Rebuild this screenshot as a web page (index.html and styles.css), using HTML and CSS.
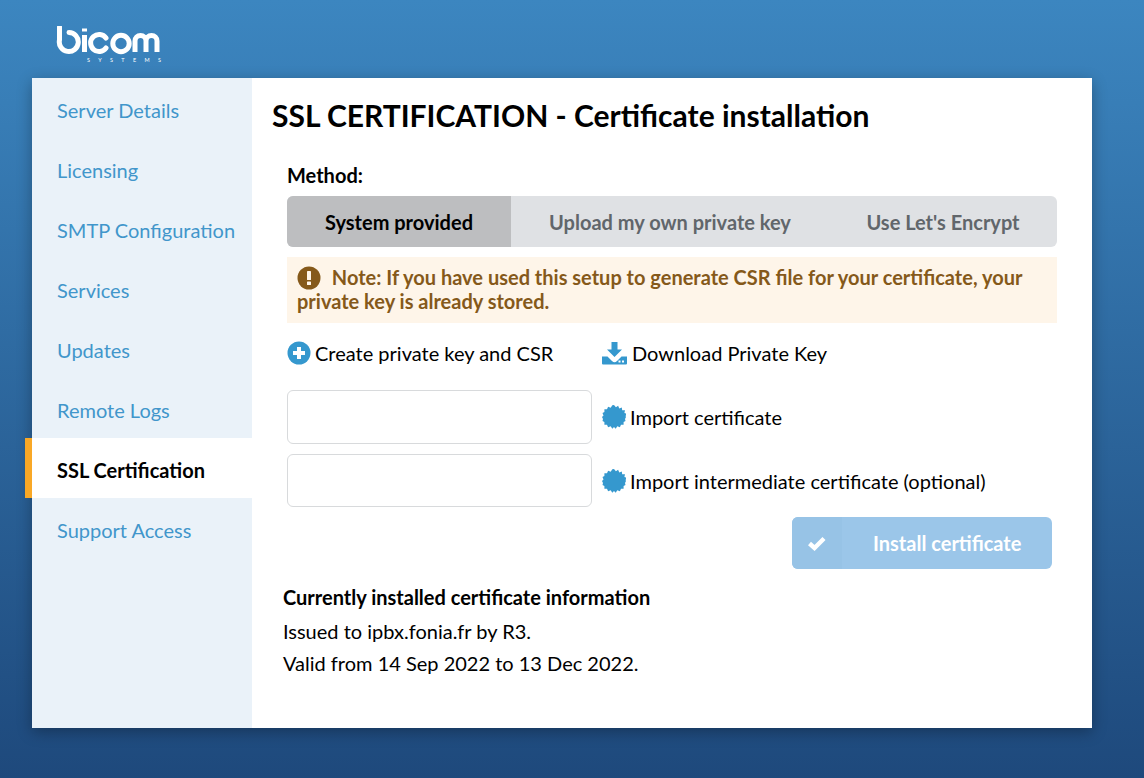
FILE: index.html
```html
<!DOCTYPE html>
<html lang="en">

<head>
    <meta charset="utf-8">
    <title>SSL Certification</title>
    <link rel="stylesheet" href="styles.css">
</head>

<body>
    <header class="top-bar">
        <svg class="logo" width="106" height="38" viewBox="0 0 106 38" fill="none" stroke="#fff" stroke-width="5">
            <path d="M3.5 1 V14 a9.5 9.5 0 1 0 9.5 -7.5" stroke-linecap="round"/>
            <path d="M28.5 9 V26"/>
            <path d="M28.5 2.5 V5.5"/>
            <path d="M50 12 a8.5 8.5 0 1 0 0 10" stroke-linecap="round"/>
            <circle cx="65" cy="17.5" r="8.2"/>
            <path d="M79 26 V15 a5.5 5.5 0 0 1 11 0 V26 M90 15 a5.5 5.5 0 0 1 11 0 V26 "/>
            <text x="31" y="36" fill="#fff" stroke="none" font-family="Lato, sans-serif" font-size="5.5" textLength="74">SYSTEMS</text>
        </svg>
    </header>

    <div class="panel">
        <nav class="side-menu">
            <a class="menu-item">Server Details</a>
            <a class="menu-item">Licensing</a>
            <a class="menu-item">SMTP Configuration</a>
            <a class="menu-item">Services</a>
            <a class="menu-item">Updates</a>
            <a class="menu-item">Remote Logs</a>
            <a class="menu-item active">SSL Certification</a>
            <a class="menu-item">Support Access</a>
        </nav>

        <main class="content">
            <h1 class="page-title">SSL CERTIFICATION - Certificate installation</h1>

            <div class="form-area">
                <div class="method-label">Method:</div>
                <div class="tabs">
                    <div class="tab active">System provided</div>
                    <div class="tab own-key">Upload my own private key</div>
                    <div class="tab encrypt">Use Let's Encrypt</div>
                </div>

                <div class="note">
                    <svg class="note-icon" width="24" height="24" viewBox="0 0 24 24">
                        <circle cx="12" cy="12" r="11.5" fill="#85591a"/>
                        <rect x="10" y="5" width="4" height="9" rx="0.6" fill="#fef5e9"/>
                        <rect x="10" y="15.5" width="4" height="3.6" rx="0.6" fill="#fef5e9"/>
                    </svg>
                    Note: If you have used this setup to generate CSR file for your certificate, your private key is already stored.
                </div>

                <div class="actions">
                    <a class="action create">
                        <svg width="24" height="24" viewBox="0 0 24 24">
                            <circle cx="12" cy="12" r="11.5" fill="#3598ce"/>
                            <path d="M12 6 V18 M6 12 H18" stroke="#fff" stroke-width="4"/>
                        </svg>
                        Create private key and CSR
                    </a>
                    <a class="action download">
                        <svg width="25" height="24" viewBox="0 0 25 24" fill="#3598ce">
                            <path d="M9.5 1 H15.5 V8.5 H20 L12.5 16 L5 8.5 H9.5 Z"/>
                            <path d="M0 15.5 H5.5 L10 20 a3.5 3.5 0 0 0 5 0 L19.5 15.5 H25 V22.5 a1 1 0 0 1 -1 1 H1 a1 1 0 0 1 -1 -1 Z"/>
                            <rect x="16.5" y="19.5" width="2" height="2" fill="#fff"/>
                            <rect x="20" y="19.5" width="2" height="2" fill="#fff"/>
                        </svg>
                        Download Private Key
                    </a>
                </div>

                <div class="import-row first">
                    <input class="cert-input" type="text">
                    <svg class="seal" width="24" height="24" viewBox="0 0 24 24">
                        <use href="#seal-shape"/>
                    </svg>
                    <span>Import certificate</span>
                </div>
                <div class="import-row second">
                    <input class="cert-input" type="text">
                    <svg class="seal" width="24" height="24" viewBox="0 0 24 24">
                        <use href="#seal-shape"/>
                    </svg>
                    <span>Import intermediate certificate (optional)</span>
                </div>

                <div class="button-row">
                    <button class="install-button" disabled>
                        <span class="button-icon">
                            <svg width="20" height="16" viewBox="0 0 20 16">
                                <path d="M2.5 8.5 L7.5 13 L17 3.5" fill="none" stroke="#fff" stroke-width="4.4"/>
                            </svg>
                        </span>
                        <span class="button-text">Install certificate</span>
                    </button>
                </div>
            </div>

            <div class="cert-info">
                <h2>Currently installed certificate information</h2>
                <p>Issued to ipbx.fonia.fr by R3.</p>
                <p>Valid from 14 Sep 2022 to 13 Dec 2022.</p>
            </div>
        </main>
    </div>

    <svg width="0" height="0" class="defs">
        <polygon id="seal-shape" fill="#3598ce" points="12,0 13.9,2.3 16.1,0.7 17.3,3.4 19.8,2.4 20.2,5.3 23,5.2 22.4,8 25,9 23.500,11 24,12 23,14 23.500,16 21.600,17 21.600,19.700 19,19.700 17.900,22.300 15.300,21.300 13.700,23.700 12,22 10.300,23.700 8.700,21.300 6.100,22.300 5,19.700 2.400,19.700 2.400,17 0.500,16 1,14 0,12 1.500,10.500 0.500,8 2.400,7 2.400,4.300 5,4.300 6.100,1.700 8.700,2.700 10.300,0.300" transform="translate(0 0)"/>
    </svg>
</body>

</html>
```

FILE: styles.css
```css
* {
    box-sizing: border-box;
}

body {
    margin: 0;
    height: 778px;
    overflow: hidden;
    font-family: Lato, 'Liberation Sans', sans-serif;
    font-size: 20px;
    color: #000;
    background: linear-gradient(#3c86c0, #1e497c);
}

.top-bar {
    height: 78px;
    padding: 26px 0 0 56px;
}

.logo {
    display: block;
}

.defs {
    position: absolute;
}

.panel {
    display: flex;
    width: 1060px;
    height: 650px;
    margin-left: 32px;
    background: #fff;
    box-shadow: 0 4px 14px rgba(0, 0, 0, 0.3);
}

.side-menu {
    width: 220px;
    background: #eaf2f9;
}

.menu-item {
    display: flex;
    align-items: center;
    height: 60px;
    padding: 4px 0 0 25px;
    color: #4196cb;
}

.menu-item.active {
    margin-left: -7px;
    padding-left: 25px;
    background: #fff;
    border-left: 7px solid #f9a826;
    color: #000;
    font-weight: 700;
}

.content {
    flex: 1;
    padding: 0 20px;
}

.page-title {
    margin: 0;
    padding-top: 18px;
    font-size: 30px;
    line-height: 38px;
    font-weight: 700;
}

.form-area {
    width: 770px;
    margin-left: 15px;
}

.method-label {
    margin-top: 28px;
    font-weight: 700;
    line-height: 26px;
}

.tabs {
    display: flex;
    height: 51px;
    margin-top: 8px;
    background: #dfe1e4;
    border-radius: 6px;
    overflow: hidden;
    color: #61666b;
    font-weight: 700;
}

.tab {
    display: flex;
    align-items: center;
    justify-content: center;
}

.tab.active {
    width: 224px;
    background: #bdbec0;
    color: #000;
}

.tab.own-key {
    width: 318px;
}

.tab.encrypt {
    width: 228px;
}

.note {
    height: 66px;
    margin-top: 10px;
    padding: 9px 10px;
    background: #fef5e9;
    color: #85591a;
    font-weight: 700;
    line-height: 23px;
}

.note-icon {
    vertical-align: -5px;
    margin-right: 6px;
}

.actions {
    display: flex;
    margin-top: 18px;
    line-height: 24px;
}

.action {
    display: flex;
    align-items: center;
    gap: 4px;
}

.action.create {
    width: 315px;
}

.action.download {
    gap: 5px;
}

.import-row {
    display: flex;
    align-items: center;
    gap: 10px;
}

.import-row.first {
    margin-top: 25px;
}

.import-row.second {
    margin-top: 10px;
}

.import-row .seal {
    margin-right: -6px;
}

.cert-input {
    width: 305px;
    height: 54px;
    border: 1px solid #d8dadc;
    border-radius: 6px;
    background: #fff;
}

.second .cert-input {
    height: 53px;
}

.button-row {
    display: flex;
    justify-content: flex-end;
    margin-top: 10px;
    padding-right: 5px;
}

.install-button {
    display: flex;
    width: 260px;
    height: 52px;
    padding: 0;
    border: none;
    border-radius: 6px;
    background: #9bc6e9;
    color: #fff;
    font-family: inherit;
    font-size: 20px;
    font-weight: 700;
}

.button-icon {
    display: flex;
    align-items: center;
    justify-content: center;
    width: 50px;
    height: 100%;
    padding-right: 1px;
    background: #97c3e6;
    border-radius: 6px 0 0 6px;
}

.button-text {
    flex: 1;
    align-self: center;
    padding-right: 0;
    margin-left: 0;
    padding-left: 31px;
    text-align: left;
}

.cert-info {
    margin-top: 15px;
    margin-left: 11px;
}

.cert-info h2 {
    margin: 0 0 8px;
    font-size: 20px;
    line-height: 26px;
    font-weight: 700;
}

.cert-info p {
    margin: 0 0 6px;
    line-height: 26px;
}
```
